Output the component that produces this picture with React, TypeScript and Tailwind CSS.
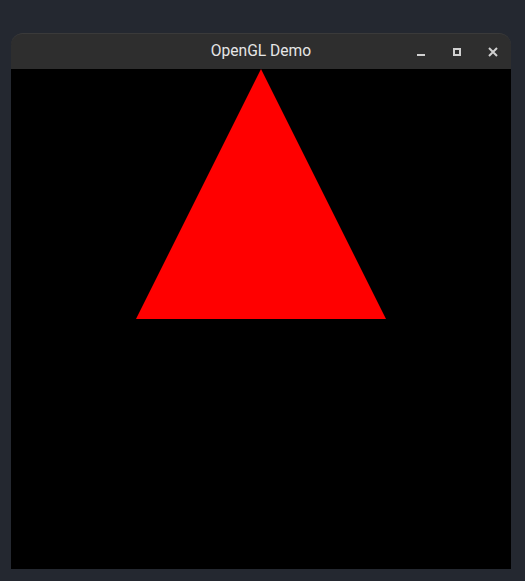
export default function App() {
  return (
    <div className="w-[525px] h-[581px] bg-[#242830] pt-[33px] pl-[11px]" style={{ fontFamily: "Roboto, 'Noto Sans', sans-serif" }}>
      <div className="w-[500px] flex flex-col">
        <div className="relative h-[36px] bg-[#2e2e2e] rounded-t-[12px] border-t border-[#3a3a3a] flex items-center justify-center">
          <span className="text-[15.6px] text-[#e6e6e6] leading-none">OpenGL Demo</span>
          <div className="absolute right-0 top-0 h-full flex items-center">
            <div className="w-[36px] h-full flex items-center justify-center">
              <div className="w-[8px] h-[2px] bg-[#d0d0d0] mt-[7px]" />
            </div>
            <div className="w-[36px] h-full flex items-center justify-center">
              <div className="w-[8px] h-[8px] border-2 border-[#d0d0d0]" />
            </div>
            <div className="w-[36px] h-full flex items-center justify-center">
              <svg width="10" height="10" viewBox="0 0 10 10">
                <path d="M1 1L9 9M9 1L1 9" stroke="#d0d0d0" strokeWidth="2" />
              </svg>
            </div>
          </div>
        </div>
        <div className="w-[500px] h-[500px] bg-black">
          <svg width="500" height="500" viewBox="0 0 500 500">
            <polygon points="125,250 375,250 250,0" fill="#ff0000" />
          </svg>
        </div>
      </div>
    </div>
  );
}
